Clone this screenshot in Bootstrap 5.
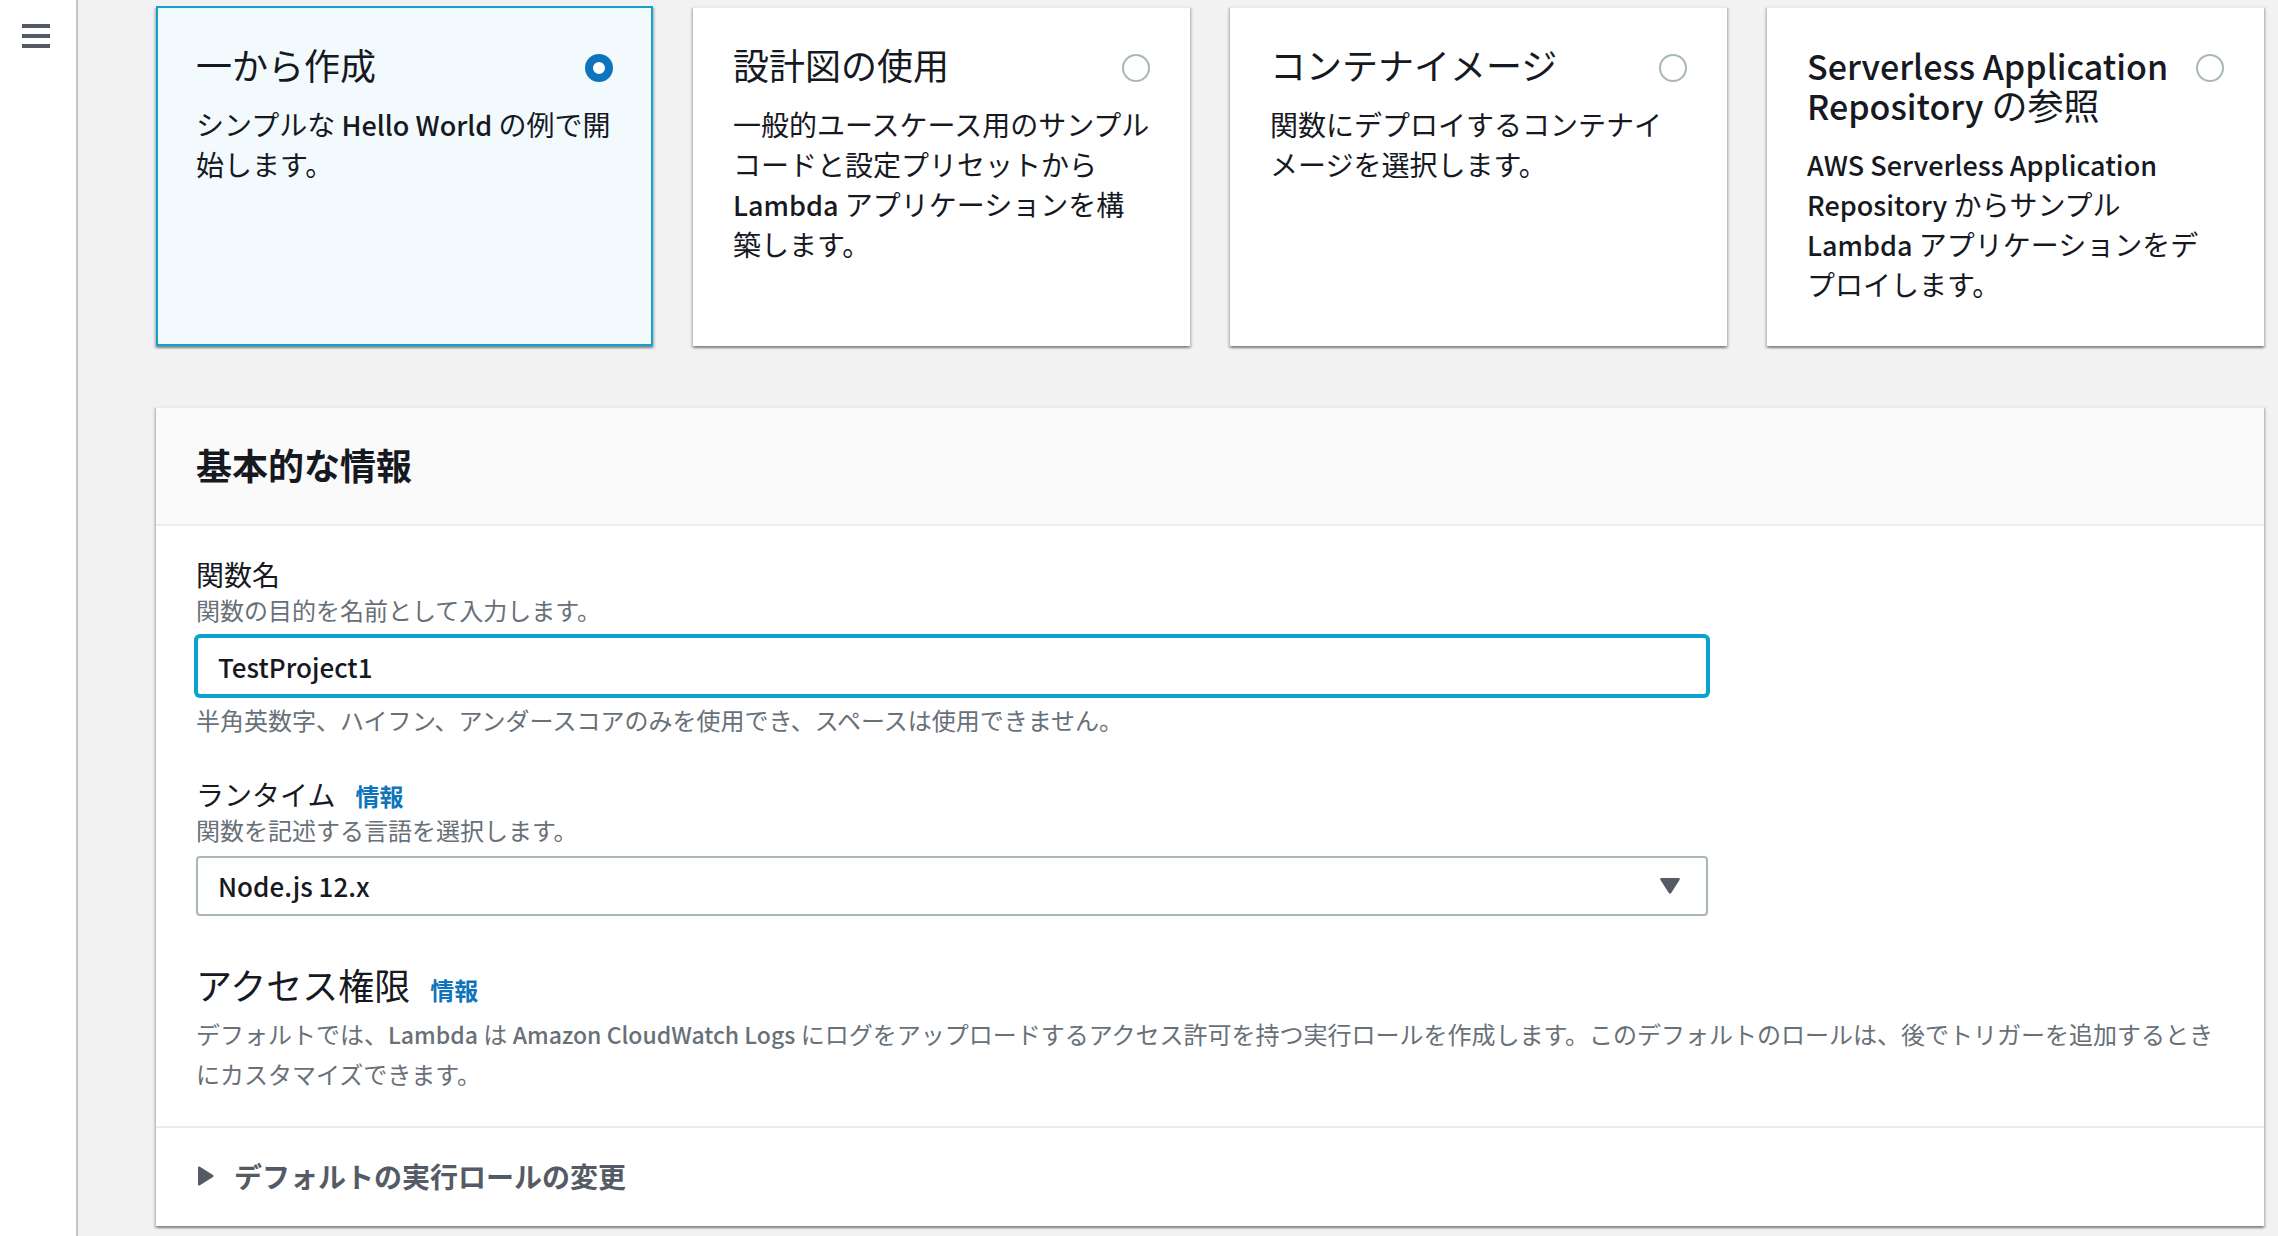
<!DOCTYPE html>
<html lang="ja">
<head>
<meta charset="utf-8">
<meta name="viewport" content="width=device-width, initial-scale=1">
<title>関数の作成</title>
<link href="https://cdn.jsdelivr.net/npm/bootstrap@5.3.0/dist/css/bootstrap.min.css" rel="stylesheet">
<style>
  body {
    background: #f2f2f2;
    color: #16191f;
    font-family: "Noto Sans CJK JP", sans-serif;
    font-size: 28px;
    line-height: 40px;
    line-break: strict;
  }
  .side-rail { width: 78px; padding: 24px 0 0 22px; border-right: 2px solid #bfc7c7; }
  .content-area { padding: 6px 14px 10px 78px; }
  .option-grid { gap: 40px; margin-bottom: 60px; }
  .option-tile, .panel {
    background: #fff;
    border-top: 2px solid #eaeded;
    box-shadow: 0 2px 2px 0 rgba(0,28,36,.3), 2px 2px 2px 0 rgba(0,28,36,.15), -2px 2px 2px 0 rgba(0,28,36,.15);
  }
  .option-tile { flex: 1 1 0; min-width: 0; min-height: 340px; padding: 36px 34px 40px 40px; cursor: pointer; }
  .option-tile.chosen { background: #f2fafd; border: 2px solid #12a3ca; padding-left: 38px; padding-right: 32px; }
  .tile-head { padding-right: 6px; margin-bottom: 20px; gap: 16px; }
  .title-text { font-size: 36px; line-height: 40px; font-weight: 400; }
  .option-tile .form-check-input {
    width: 28px; height: 28px; margin: 10px 0 0; border: 2px solid #aab7b8; background: #fff; box-shadow: none;
  }
  .option-tile .form-check-input:checked { border: 8px solid #0e74bb; }
  .latin { font-size: 27px; line-height: 1; font-weight: 500; }
  .title-text .latin { font-size: 34px; }
  .hint .latin { font-size: 23px; }
  .panel-head { background: #fafafa; border-bottom: 2px solid #eaeded; padding: 36px 40px 40px; }
  .panel-head h2 { font-size: 36px; line-height: 40px; font-weight: 700; }
  .panel-main { padding: 30px 34px 32px 40px; }
  .field-block { max-width: 1512px; }
  .name-block { margin-bottom: 40px; }
  .label-row { gap: 20px; }
  .field-label { line-height: 36px; }
  .hint { font-size: 24px; line-height: 36px; color: #687078; }
  .rule-note { line-height: 32px; }
  .access-note { line-height: 40px; margin: 8px 0 0; }
  .info-link { font-size: 24px; line-height: 32px; font-weight: 700; color: #0e74bb; text-decoration: none; }
  .field-box, .field-box:focus {
    height: 60px; padding: 0 20px; font-size: 26px; line-height: 40px; font-weight: 500;
    color: #16191f; border: 2px solid #aab7b8; border-radius: 4px; background-color: #fff; box-shadow: none;
  }
  .field-box.active-box { border-color: #0aa3cd; box-shadow: 0 0 0 2px #0aa3cd; }
  select.field-box {
    background-image: url("data:image/svg+xml,%3Csvg xmlns='http://www.w3.org/2000/svg' viewBox='0 0 20 16'%3E%3Cpath d='M1.500 0H18.500Q20.500 0 19.500 2L11.200 15Q10 16.600 8.800 15L.5 2Q-.5 0 1.500 0Z' fill='%23545b64'/%3E%3C/svg%3E");
    background-size: 20px 16px; background-position: right 26px center;
  }
  .panel-foot { border-top: 2px solid #eaeded; padding: 28px 40px 30px; }
  .expander { border: 0; background: none; padding: 0; gap: 18px; font-weight: 700; color: #545b64; }
</style>
</head>
<body>
<div class="d-flex min-vh-100">
  <nav class="side-rail bg-white flex-shrink-0" aria-label="サイドメニュー">
    <button type="button" class="btn p-0 border-0 d-block" aria-label="メニューを開く">
      <svg class="d-block" width="28" height="24" viewBox="0 0 28 24" fill="#545b64"><path d="M0 0h28v4H0zM0 10h28v4H0zM0 20h28v4H0z"/></svg>
    </button>
  </nav>
  <main class="content-area flex-grow-1">
    <div class="option-grid d-flex" role="radiogroup">
      <label class="option-tile chosen">
        <span class="tile-head d-flex justify-content-between align-items-start">
          <span class="title-text">一から作成</span>
          <input class="form-check-input flex-shrink-0" type="radio" name="method" checked>
        </span>
        <span class="d-block">シンプルな <span class="latin">Hello World</span> の例で開始します。</span>
      </label>
      <label class="option-tile">
        <span class="tile-head d-flex justify-content-between align-items-start">
          <span class="title-text">設計図の使用</span>
          <input class="form-check-input flex-shrink-0" type="radio" name="method">
        </span>
        <span class="d-block">一般的ユースケース用のサンプルコードと設定プリセットから <span class="latin">Lambda</span> アプリケーションを構<br>築します。</span>
      </label>
      <label class="option-tile">
        <span class="tile-head d-flex justify-content-between align-items-start">
          <span class="title-text">コンテナイメージ</span>
          <input class="form-check-input flex-shrink-0" type="radio" name="method">
        </span>
        <span class="d-block">関数にデプロイするコンテナイメージを選択します。</span>
      </label>
      <label class="option-tile">
        <span class="tile-head d-flex justify-content-between align-items-start">
          <span class="title-text"><span class="latin">Serverless Application Repository</span> の参照</span>
          <input class="form-check-input flex-shrink-0" type="radio" name="method">
        </span>
        <span class="d-block"><span class="latin">AWS Serverless Application Repository</span> からサンプル <span class="latin">Lambda</span> アプリケーションをデ<br>プロイします。</span>
      </label>
    </div>

    <section class="panel">
      <div class="panel-head"><h2 class="m-0">基本的な情報</h2></div>
      <div class="panel-main">
        <div class="field-block name-block">
          <label class="field-label d-block" for="fn-name">関数名</label>
          <div class="hint mb-2">関数の目的を名前として入力します。</div>
          <input id="fn-name" type="text" class="form-control field-box active-box" value="TestProject1">
          <div class="hint rule-note mt-2">半角英数字、ハイフン、アンダースコアのみを使用でき、スペースは使用できません。</div>
        </div>
        <div class="field-block mb-5">
          <div class="label-row d-flex align-items-baseline">
            <label class="field-label" for="runtime">ランタイム</label>
            <a class="info-link" href="#">情報</a>
          </div>
          <div class="hint mb-2">関数を記述する言語を選択します。</div>
          <select id="runtime" class="form-select field-box"><option>Node.js 12.x</option></select>
        </div>
        <div class="label-row d-flex align-items-baseline">
          <h3 class="title-text m-0">アクセス権限</h3>
          <a class="info-link" href="#">情報</a>
        </div>
        <p class="hint access-note">デフォルトでは、<span class="latin">Lambda</span> は <span class="latin">Amazon CloudWatch Logs</span> にログをアップロードするアクセス許可を持つ実行ロールを作成します。このデフォルトのロールは、後でトリガーを追加するときにカスタマイズできます。</p>
      </div>
      <div class="panel-foot">
        <button type="button" class="expander d-flex align-items-center" aria-expanded="false">
          <svg width="20" height="20" viewBox="0 0 20 20" fill="#545b64"><path d="M2 1.500Q2 0 3.500.6L17 9Q18.500 10 17 11L3.500 19.400Q2 20 2 18.500Z"/></svg>
          <span>デフォルトの実行ロールの変更</span>
        </button>
      </div>
    </section>
  </main>
</div>
<script src="https://cdn.jsdelivr.net/npm/bootstrap@5.3.0/dist/js/bootstrap.bundle.min.js"></script>
</body>
</html>
